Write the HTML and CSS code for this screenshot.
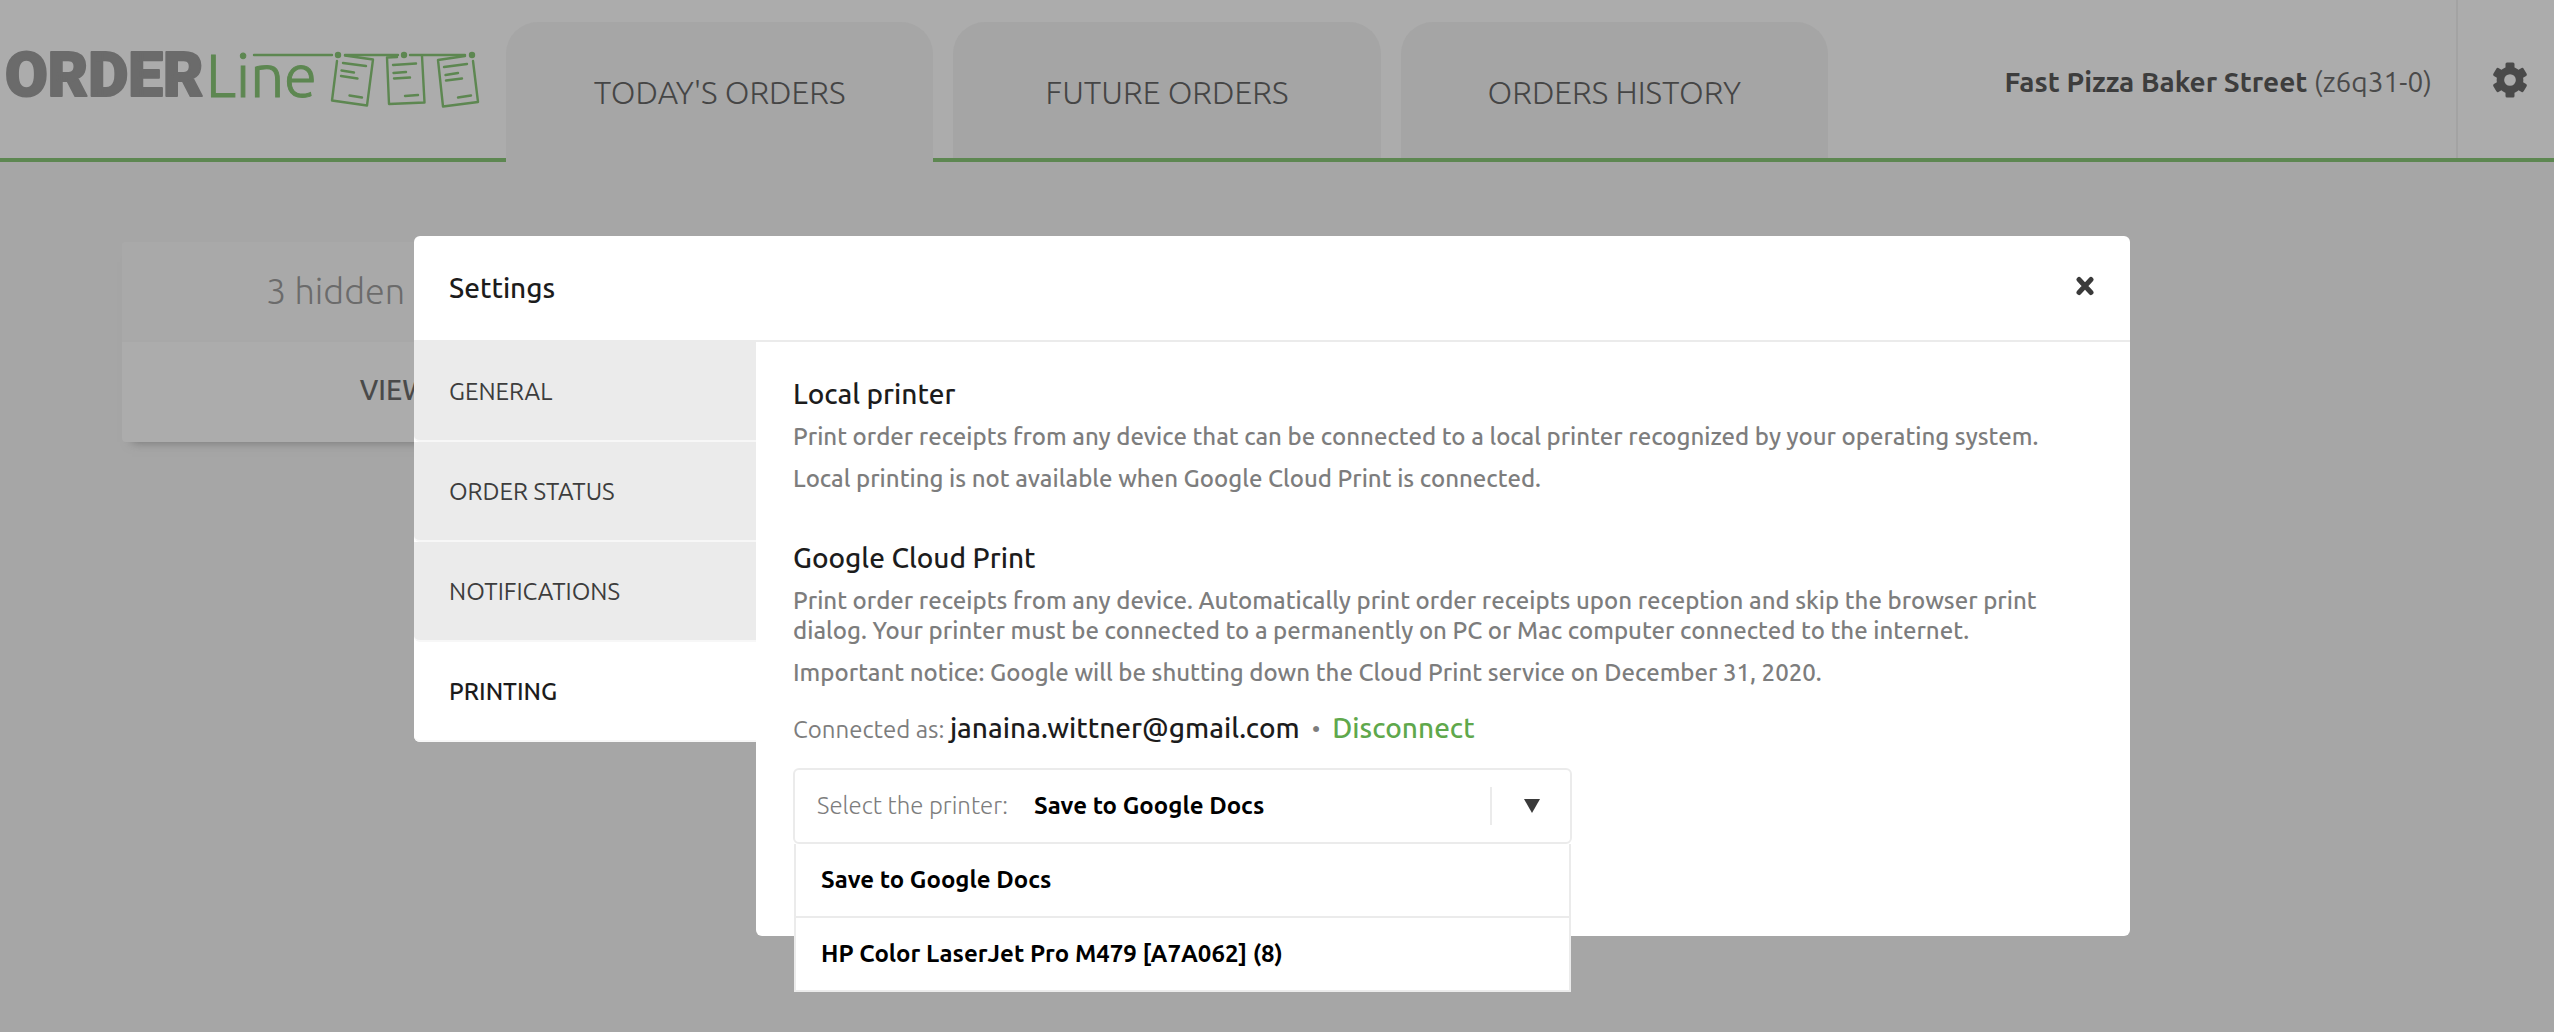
FILE: index.html
```
<!DOCTYPE html>
<html lang="en">
<head>
<meta charset="utf-8">
<meta name="viewport" content="width=device-width, initial-scale=1">
<title>Order Line</title>
<link rel="stylesheet" href="styles.css">
</head>
<body>
<header class="topbar">
  <a class="logo" href="#" aria-label="Order Line">
    <svg width="506" height="158" viewBox="0 0 506 158">
      <text class="logo-order" x="5" y="96">ORDER</text>
      <text class="logo-line" x="206" y="97">Line</text>
      <g fill="none" stroke="currentColor" stroke-width="2.4" stroke-linecap="round" stroke-linejoin="round">
        <path d="M254 55H332M345 55H398M410 55H465"/>
        <path d="M337 61L332 100.500L367 105.500L373 59.500L345 55.500"/>
        <path d="M397 57L387 57.500L389 104L424.500 102.500L422 56"/>
        <path d="M465 56L438 60L443 106.500L478 102L473 61"/>
        <path d="M343 63L366 66M341.500 70.500L354 72.500M341 76L357.500 78.500M349.500 95.500L362 97.500"/>
        <path d="M393 65L416 63.500M393.500 73L406 72M394 78.500L410 77.500M405 96L418 95"/>
        <path d="M444 67L467 64M445.500 75L458 73M446 80.500L462 78.500M458 97.500L471 95.500"/>
      </g>
      <g fill="currentColor">
        <circle cx="338" cy="55" r="3.2"/><circle cx="404" cy="55" r="3.2"/><circle cx="472" cy="55" r="3.2"/>
      </g>
    </svg>
  </a>
  <nav class="tabs">
    <a class="tab tab-active" href="#">TODAY'S ORDERS</a>
    <a class="tab" href="#">FUTURE ORDERS</a>
    <a class="tab" href="#">ORDERS HISTORY</a>
  </nav>
  <p class="store"><strong>Fast Pizza Baker Street</strong> (z6q31-0)</p>
  <button class="gear" type="button" aria-label="Settings">
    <svg width="36" height="36" viewBox="-18 -18 36 36" fill="currentColor">
      <defs><rect id="tooth" x="-4.500" y="-17.500" width="9" height="10" rx="1.500"/></defs>
      <use href="#tooth"/><use href="#tooth" transform="rotate(60)"/><use href="#tooth" transform="rotate(120)"/>
      <use href="#tooth" transform="rotate(180)"/><use href="#tooth" transform="rotate(240)"/><use href="#tooth" transform="rotate(300)"/>
      <circle r="9.600" fill="none" stroke="currentColor" stroke-width="7.500"/>
    </svg>
  </button>
</header>

<main class="board">
  <section class="hidden-card">
    <p class="hidden-count">3 hidden</p>
    <button class="hidden-view" type="button">VIEW</button>
  </section>
</main>

<div class="overlay">
  <div class="dialog" role="dialog" aria-labelledby="dialog-title">
    <div class="dialog-head">
      <h1 id="dialog-title">Settings</h1>
      <button class="close" type="button" aria-label="Close">
        <svg width="20" height="20" viewBox="0 0 20 20"><path d="M4 3.500L16 16.500M16 3.500L4 16.500" fill="none" stroke="currentColor" stroke-width="5" stroke-linecap="round"/></svg>
      </button>
    </div>
    <div class="dialog-body">
      <nav class="menu">
        <a href="#">GENERAL</a>
        <a href="#">ORDER STATUS</a>
        <a href="#">NOTIFICATIONS</a>
        <a class="menu-active" href="#">PRINTING</a>
      </nav>
      <div class="panel">
        <section class="block">
          <h2>Local printer</h2>
          <p>Print order receipts from any device that can be connected to a local printer recognized by your operating system.</p>
          <p>Local printing is not available when Google Cloud Print is connected.</p>
        </section>
        <section class="block">
          <h2>Google Cloud Print</h2>
          <p>Print order receipts from any device. Automatically print order receipts upon reception and skip the browser print dialog. Your printer must be connected to a permanently on PC or Mac computer connected to the internet.</p>
          <p>Important notice: Google will be shutting down the Cloud Print service on December 31, 2020.</p>
        </section>
        <div class="account">
          <span>Connected as: <span class="email">janaina.wittner@gmail.com</span></span>
          <span class="dot">•</span>
          <a href="#">Disconnect</a>
        </div>
        <div class="picker">
          <div class="picker-box">
            <label for="printer">Select the printer:</label>
            <select id="printer">
              <option>Save to Google Docs</option>
              <option>HP Color LaserJet Pro M479 [A7A062] (8)</option>
            </select>
            <svg class="arrow" width="16" height="14" viewBox="0 0 16 14" fill="currentColor"><path d="M0 0H16L8 14Z"/></svg>
          </div>
          <ul class="picker-list">
            <li><button type="button">Save to Google Docs</button></li>
            <li><button type="button">HP Color LaserJet Pro M479 [A7A062] (8)</button></li>
          </ul>
        </div>
      </div>
    </div>
  </div>
</div>
</body>
</html>
```
FILE: styles.css
```
* { box-sizing: border-box; }

body {
  margin: 0;
  min-height: 100vh;
  background: #a6a6a6;
  color: #1c1c1c;
  font: 400 24px/30px Ubuntu, "Noto Sans", sans-serif;
}

h1, h2, p, ul { margin: 0; padding: 0; }
a { color: inherit; text-decoration: none; }
button, select {
  margin: 0;
  padding: 0;
  border: 0;
  background: none;
  color: inherit;
  font: inherit;
}

/* Top bar */
.topbar {
  display: flex;
  height: 162px;
  border-bottom: 4px solid #5d8751;
  background: #acacac;
}
.logo { flex: none; color: #5d8751; }
.logo svg { display: block; }
.logo-order {
  font: 900 62px Roboto, sans-serif;
  fill: #6b6b6b;
  stroke: #6b6b6b;
  stroke-width: 2px;
  stroke-linejoin: round;
}
.logo-line {
  font: 300 60px Ubuntu, "Noto Sans", sans-serif;
  fill: currentColor;
  stroke: currentColor;
  stroke-width: 1px;
}

.tabs {
  display: flex;
  flex: 0 1 1322px;
  gap: 20px;
  padding-top: 22px;
}
.tab {
  display: flex;
  flex: 1;
  align-items: center;
  justify-content: center;
  padding-top: 4px;
  border-radius: 32px 32px 0 0;
  background: #a5a5a5;
  color: #454545;
  font-size: 32px;
  font-weight: 300;
  line-height: 36px;
}
.tab-active {
  margin-bottom: -4px;
  padding-bottom: 4px;
  background: #a6a6a6;
}

.store {
  flex: 1;
  align-self: center;
  padding: 6px 24px 0 0;
  color: #4a4a4a;
  font-size: 28px;
  line-height: 32px;
  text-align: right;
}
.store strong { color: #3d3d3d; font-weight: 700; }
.gear {
  display: flex;
  flex: none;
  align-items: center;
  justify-content: center;
  width: 98px;
  padding: 2px 0 0 8px;
  border-left: 2px solid #a3a3a3;
  color: #4a4a4a;
}

/* Orders behind the dialog */
.board { padding: 80px 122px; }
.hidden-card {
  width: 548px;
  border-radius: 4px;
  background: #acacac;
  box-shadow: 0 10px 10px -10px #707070;
}
.hidden-count {
  padding: 28px 144px 29px;
  border-bottom: 2px solid #a8a8a8;
  border-radius: 4px 4px 0 0;
  background: #a9a9a9;
  color: #6b6b6b;
  font-size: 36px;
  font-weight: 300;
  line-height: 41px;
}
.hidden-view {
  width: 100%;
  height: 100px;
  padding: 0 4px 4px 0;
  color: #4a4a4a;
  font-size: 28px;
  font-weight: 500;
}

/* Settings dialog */
.overlay {
  position: fixed;
  inset: 0;
  display: flex;
  align-items: flex-start;
  justify-content: center;
  padding: 236px 10px 0 0;
}
.dialog { width: 1716px; max-width: 90%; }
.dialog-head {
  display: flex;
  align-items: center;
  justify-content: space-between;
  height: 106px;
  padding: 0 35px;
  border-bottom: 2px solid #ebebeb;
  border-radius: 6px 6px 0 0;
  background: #fff;
}
.dialog-head h1 { font-size: 28px; font-weight: 500; line-height: 32px; }
.close { display: flex; padding-bottom: 4px; color: #3a3a3a; }

.dialog-body { display: flex; align-items: flex-start; }
.menu {
  flex: 0 0 342px;
  border-radius: 0 0 0 6px;
  background: #fff;
}
.menu a {
  display: flex;
  align-items: center;
  height: 100px;
  padding: 2px 35px 0;
  border-bottom: 2px solid #f7f7f7;
  border-radius: 0 0 0 6px;
  background: #ebebeb;
  color: #3d3d3d;
}
.menu .menu-active { background: #fff; color: #1c1c1c; font-weight: 500; }

.panel {
  flex: 1;
  padding: 36px 88px 92px 37px;
  border-radius: 0 0 6px 6px;
  background: #fff;
  color: #7d7d7d;
}
.block { display: grid; gap: 12px; font-weight: 500; }
.block + .block { margin-top: 48px; }
.block h2 { color: #1c1c1c; font-size: 28px; font-weight: 500; line-height: 32px; }

.account {
  display: flex;
  align-items: baseline;
  gap: 12px;
  margin: 24px 0 22px;
  line-height: 32px;
}
.account .email { color: #1c1c1c; font-size: 28px; font-weight: 500; }
.account a { color: #5fa84c; font-size: 28px; font-weight: 500; }

.picker { position: relative; width: 779px; max-width: 100%; }
.picker-box {
  display: flex;
  align-items: center;
  gap: 26px;
  height: 76px;
  padding: 0 30px 0 22px;
  border: 2px solid #ebebeb;
  border-radius: 6px;
}
.picker-box label { flex: none; font-weight: 300; }
.picker-box select {
  flex: 1;
  min-width: 0;
  height: 38px;
  margin-right: 6px;
  border-right: 2px solid #ebebeb;
  appearance: none;
  color: #000;
  font-weight: 700;
}
.arrow { color: #3a3a3a; }
.picker-list {
  position: absolute;
  top: 76px;
  left: 1px;
  right: 1px;
  border: solid #ebebeb;
  border-width: 0 2px;
  background: #fff;
  list-style: none;
}
.picker-list li { border-bottom: 2px solid #ebebeb; }
.picker-list button {
  width: 100%;
  height: 72px;
  padding: 0 25px;
  color: #000;
  font-weight: 700;
  text-align: left;
}
```
